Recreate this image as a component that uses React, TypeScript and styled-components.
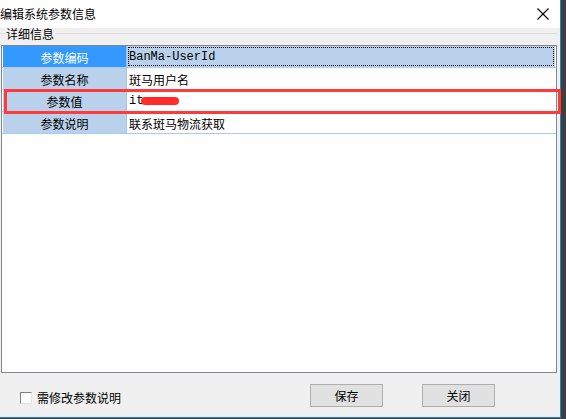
import React from "react";
import styled, { createGlobalStyle } from "styled-components";

const Global = createGlobalStyle`
  html, body { margin: 0; padding: 0; background: #3f3f3f; }
  body { font-family: "Noto Sans CJK SC", "Liberation Sans", sans-serif; font-size: 12px; color: #000; }
`;

const Screen = styled.div`
  width: 566px;
  height: 419px;
  background: #3f3f3f;
  overflow: hidden;
`;

const Window = styled.div`
  position: relative;
  width: 560px;
  height: 417px;
  border-right: 1px solid #1a84d6;
  border-bottom: 1px solid #1a84d6;
  background: #f0f0f0;
  display: flex;
  flex-direction: column;
`;

const TitleBar = styled.div`
  height: 28px;
  background: #fff;
  display: flex;
  align-items: center;
  justify-content: space-between;
`;

const Title = styled.span`
  font-size: 12px;
  line-height: 14px;
  margin-top: -1px;
`;

const CloseBtn = styled.div`
  width: 34px;
  height: 28px;
  display: flex;
  align-items: center;
  justify-content: center;
`;

const GroupHeader = styled.div`
  position: relative;
  height: 17px;
  display: flex;
  align-items: flex-start;
`;

const GroupLine = styled.div`
  position: absolute;
  left: 0;
  right: 3px;
  top: 5px;
  border-top: 1px solid #dcdcdc;
`;

const GroupLabel = styled.span`
  position: relative;
  margin-left: 5px;
  padding: 0 1px;
  background: #f0f0f0;
  line-height: 12px;
  font-size: 12px;
`;

const Grid = styled.div`
  margin-left: 1px;
  width: 554px;
  height: 326px;
  border: 1px solid #82878f;
  background: #fff;
  display: flex;
  flex-direction: column;
`;

const Row = styled.div`
  display: flex;
  height: 22px;
  border-bottom: 1px solid #a8cbee;
  box-sizing: border-box;
`;

const KeyCell = styled.div<{ $selected?: boolean }>`
  width: 123px;
  margin-left: 1px;
  border-right: 1px solid #9cc4ec;
  background: ${(p) => (p.$selected ? "#3399ff" : "#b9d1ea")};
  color: ${(p) => (p.$selected ? "#fff" : "#000")};
  display: flex;
  align-items: center;
  justify-content: center;
  font-size: 12px;
  padding-top: 1px;
`;

const ValueCell = styled.div<{ $selected?: boolean; $mono?: boolean }>`
  flex: 1;
  margin-right: 1px;
  position: relative;
  display: flex;
  align-items: center;
  padding-left: 2px;
  padding-top: 1px;
  background: ${(p) => (p.$selected ? "#b9d1ea" : "#fff")};
  outline: ${(p) => (p.$selected ? "1px dotted #000" : "none")};
  outline-offset: -2px;
  font-family: ${(p) =>
    p.$mono ? '"Liberation Mono", "Noto Sans CJK SC", monospace' : '"Noto Sans CJK SC", "Liberation Sans", sans-serif'};
  font-size: 12px;
`;

const Redaction = styled.span`
  display: inline-block;
  width: 38px;
  height: 8px;
  margin-left: -2px;
  border-radius: 4px;
  background: #ff2b2b;
  filter: blur(0.6px);
`;

const Highlight = styled.div`
  position: absolute;
  left: 4px;
  top: 89px;
  width: 551px;
  height: 19px;
  border: 3px solid #ff3a3a;
  pointer-events: none;
`;

const Footer = styled.div`
  flex: 1;
  display: flex;
  align-items: center;
  padding-left: 20px;
`;

const CheckRow = styled.label`
  display: flex;
  align-items: center;
  gap: 5px;
  margin-top: 5px;
`;

const Box = styled.span`
  width: 10px;
  height: 10px;
  background: #fff;
  border-top: 1px solid #808080;
  border-left: 1px solid #808080;
  border-right: 1px solid #e3e3e3;
  border-bottom: 1px solid #e3e3e3;
`;

const Buttons = styled.div`
  display: flex;
  gap: 39px;
  margin-left: 189px;
  margin-top: 0px;
`;

const Button = styled.div`
  width: 71px;
  height: 21px;
  background: #e1e1e1;
  border: 1px solid #adadad;
  display: flex;
  align-items: center;
  justify-content: center;
  font-size: 12px;
`;

export default function App() {
  return (
    <Screen>
      <Global />
      <Window>
        <TitleBar>
          <Title>编辑系统参数信息</Title>
          <CloseBtn>
            <svg width="12" height="12" viewBox="0 0 12 12">
              <path d="M0.5 0.5 L11.5 11.5 M11.5 0.5 L0.5 11.5" stroke="#000" strokeWidth="1.1" />
            </svg>
          </CloseBtn>
        </TitleBar>
        <GroupHeader>
          <GroupLine />
          <GroupLabel>详细信息</GroupLabel>
        </GroupHeader>
        <Grid>
          <Row>
            <KeyCell $selected>参数编码</KeyCell>
            <ValueCell $selected $mono>BanMa-UserId</ValueCell>
          </Row>
          <Row>
            <KeyCell>参数名称</KeyCell>
            <ValueCell>斑马用户名</ValueCell>
          </Row>
          <Row>
            <KeyCell>参数值</KeyCell>
            <ValueCell $mono>
              it<Redaction />
            </ValueCell>
          </Row>
          <Row>
            <KeyCell>参数说明</KeyCell>
            <ValueCell>联系斑马物流获取</ValueCell>
          </Row>
        </Grid>
        <Footer>
          <CheckRow>
            <Box />
            <span>需修改参数说明</span>
          </CheckRow>
          <Buttons>
            <Button>保存</Button>
            <Button>关闭</Button>
          </Buttons>
        </Footer>
        <Highlight />
      </Window>
    </Screen>
  );
}
